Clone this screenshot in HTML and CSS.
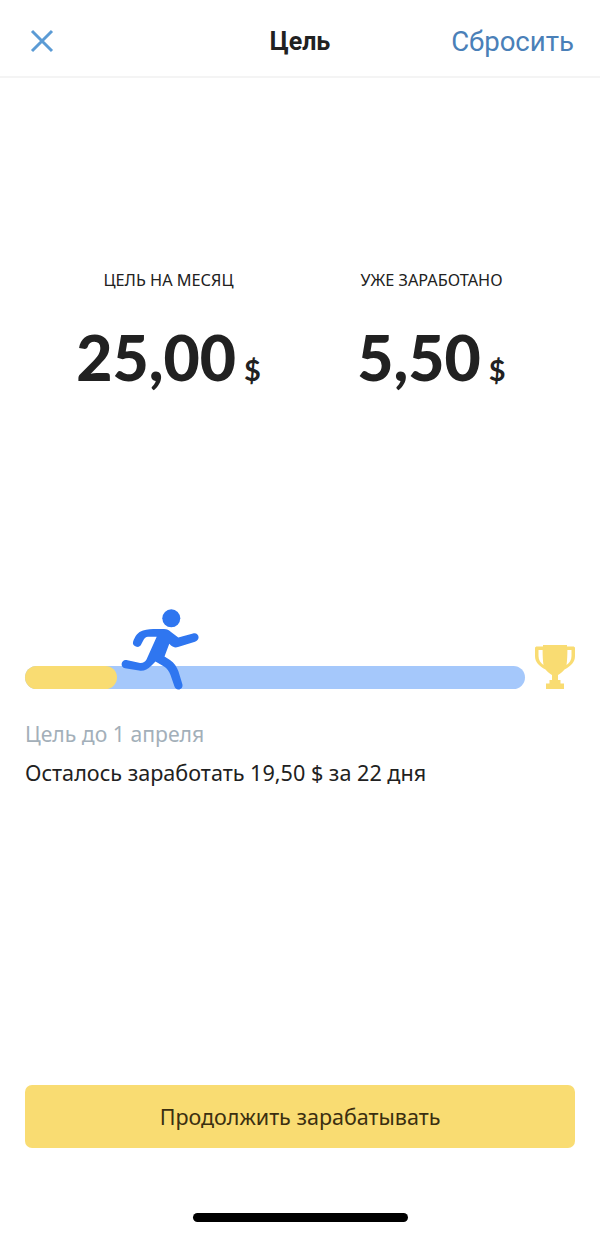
FILE: index.html
```html
<!DOCTYPE html>
<html lang="ru">
<head>
  <meta charset="UTF-8" />
  <title>Цель</title>
  <link rel="stylesheet" href="styles.css">
</head>
<body>

  <header class="topbar">
    <svg class="close-icon" width="24" height="24" viewBox="0 0 24 24">
      <path d="M2 2 L22 22 M22 2 L2 22" />
    </svg>
    <h1 class="topbar-title">Цель</h1>
    <a class="topbar-reset">Сбросить</a>
  </header>

  <section class="stats">
    <div class="stat">
      <div class="stat-label">ЦЕЛЬ НА МЕСЯЦ</div>
      <div class="stat-value">25,00<span class="stat-currency">$</span></div>
    </div>
    <div class="stat">
      <div class="stat-label">УЖЕ ЗАРАБОТАНО</div>
      <div class="stat-value">5,50<span class="stat-currency">$</span></div>
    </div>
  </section>

  <section class="goal">
    <div class="track-row">
      <div class="track">
        <div class="track-fill"></div>
        <svg class="runner" width="82" height="85" viewBox="0 0 82 85">
          <circle cx="51.3" cy="13.3" r="9" class="runner-head" />
          <path class="runner-shape" d="M13 37 C15 31 18 27 23 25.5 C27 24 32 24 37 24 L44 24 C47 24 49 25 51 27 L58.3 32.5 L73 28.5 C76 27.6 78.6 29.5 78.6 32.3 C78.6 34.6 77 36 75 36.7 L58 42 C55 43 53 42 51 40.5 L49.3 38.8 L44.5 51.5 L50 55 C54 57.5 57 62 58.5 66.5 L62.3 79 C63.2 82 61.2 84.5 58.5 84.5 C56.3 84.5 55 83 54.3 81 L50.5 70 C49 66 47 63.5 44 61.5 L35.5 56.5 L31 61 C27.5 64.8 23.5 66.3 19 65.6 L5 63.2 C2.8 62.8 1.5 61 1.6 59 C1.8 56.4 3.8 54.6 6.4 55 L19 57.8 C22.5 58.5 25 57.2 26.5 54.5 L36.7 31.7 L28 31.7 C25.8 31.7 24.5 33 23.5 35 L21 39.8 C20 41.5 18.5 42.3 16.5 41.8 C14 41.2 12.4 39.3 13 37 Z" />
        </svg>
      </div>
      <svg class="trophy" width="40" height="44" viewBox="0 0 40 44">
        <path class="trophy-cup" fill-rule="evenodd" d="M0 3 C0 2 1 1.500 2 1.500 H8 V0 H32 V1.500 H38 C39 1.500 40 2 40 3 V11 C40 17 36 21 29.500 24.500 C27.500 27 25 29 23 30 V35 H25.500 V38.500 H29 V44 H11 V38.500 H14.500 V35 H17 V30 C15 29 12.500 27 10.500 24.500 C4 21 0 17 0 11 Z M3.500 5 V11 C3.500 15 5.500 18 8.500 20 C7.800 15.500 7.600 10 7.600 5 Z M36.500 5 H32.400 C32.400 10 32.200 15.500 31.500 20 C34.500 18 36.500 15 36.500 11 Z" />
      </svg>
    </div>
    <p class="goal-date">Цель до 1 апреля</p>
    <p class="goal-left">Осталось заработать 19,50 $ за 22 дня</p>
  </section>

  <footer class="bottom">
    <button class="continue-btn">Продолжить зарабатывать</button>
    <div class="home-bar"></div>
  </footer>

</body>
</html>
```

FILE: styles.css
```css
* {
  box-sizing: border-box;
}

body {
  margin: 0;
  height: 1234px;
  display: flex;
  flex-direction: column;
  background: #fff;
  color: #212121;
  font-family: 'Noto Sans', sans-serif;
}

.topbar {
  height: 78px;
  padding: 6px 26px 0 30px;
  display: flex;
  align-items: center;
  justify-content: space-between;
  position: relative;
  border-bottom: 2px solid #f4f4f4;
  font-family: Roboto, sans-serif;
}

.close-icon path {
  fill: none;
  stroke: #5b9bd5;
  stroke-width: 3;
}

.topbar-title {
  position: absolute;
  left: 0;
  right: 0;
  margin: 0;
  text-align: center;
  font-size: 25px;
  font-weight: 700;
  color: #212121;
}

.topbar-reset {
  font-size: 27.6px;
  color: #4a80b8;
  position: relative;
}

.stats {
  margin-top: 190px;
  padding-left: 37px;
  display: grid;
  grid-template-columns: 263px 263px;
}

.stat {
  text-align: center;
}

.stat-label {
  font-size: 16.3px;
  line-height: 24px;
}

.stat-value {
  margin-top: 23px;
  font-family: Lato, sans-serif;
  font-size: 62.5px;
  line-height: 84px;
  font-weight: 900;
}

.stat-currency {
  margin-left: 8px;
  font-size: 29px;
  font-weight: 700;
}

.goal {
  margin-top: 233px;
  padding: 0 25px;
}

.track-row {
  display: flex;
  align-items: flex-end;
  gap: 10px;
}

.track {
  position: relative;
  width: 500px;
  height: 23px;
  background: #a5c8fb;
  border-radius: 12px;
}

.track-fill {
  width: 92px;
  height: 23px;
  background: #f9dc72;
  border-radius: 12px;
}

.runner {
  position: absolute;
  left: 95px;
  top: -61px;
}

.runner-head,
.runner-shape {
  fill: #2f76f0;
}

.trophy {
  flex: none;
}

.trophy-cup {
  fill: #f9dc72;
}

.goal-date {
  margin: 31px 0 0;
  font-size: 21.2px;
  line-height: 28px;
  color: #a3afb9;
}

.goal-left {
  margin: 11px 0 0;
  font-size: 21.6px;
  line-height: 28px;
}

.bottom {
  margin-top: auto;
  padding: 0 25px 12px;
}

.continue-btn {
  display: block;
  width: 100%;
  height: 63px;
  border: none;
  border-radius: 7px;
  background: #f9dc72;
  color: #3b2f10;
  font-family: 'Noto Sans', sans-serif;
  font-size: 21.5px;
}

.home-bar {
  width: 215px;
  height: 9px;
  margin: 65px auto 0;
  border-radius: 5px;
  background: #000;
}
```
